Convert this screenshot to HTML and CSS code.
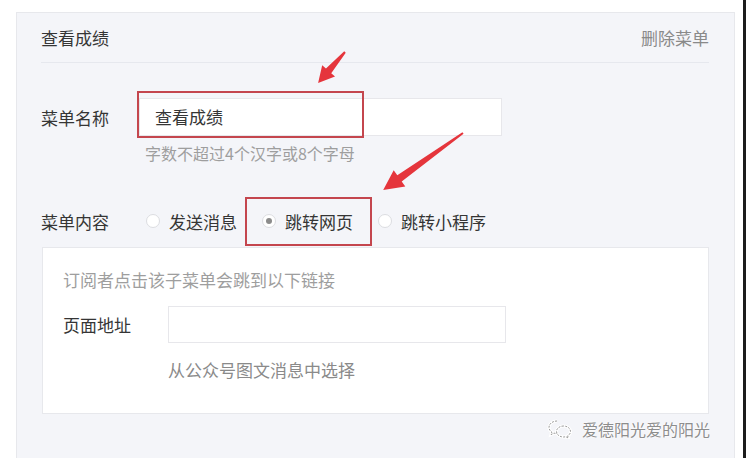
FILE: index.html
```html
<!DOCTYPE html>
<html lang="zh-CN">

<head>
    <meta charset="UTF-8">
    <meta name="viewport" content="width=device-width, initial-scale=1.0">
    <title>菜单设置</title>
    <link rel="stylesheet" href="styles.css">
</head>

<body>
    <div class="frame">
        <div class="menu-panel">
            <div class="panel-head">
                <span class="panel-title">查看成绩</span>
                <a class="delete-link">删除菜单</a>
            </div>

            <div class="form-row name-row">
                <label class="form-label">菜单名称</label>
                <div class="input-box">查看成绩</div>
            </div>
            <div class="form-hint">字数不超过4个汉字或8个字母</div>

            <div class="form-row content-row">
                <label class="form-label">菜单内容</label>
                <div class="radio-group">
                    <span class="radio-item"><i class="radio"></i>发送消息</span>
                    <span class="radio-item"><i class="radio checked"></i>跳转网页</span>
                    <span class="radio-item"><i class="radio"></i>跳转小程序</span>
                </div>
            </div>

            <div class="link-box">
                <div class="link-tip">订阅者点击该子菜单会跳到以下链接</div>
                <div class="form-row url-row">
                    <label class="url-label">页面地址</label>
                    <div class="input-box url-input"></div>
                </div>
                <div class="pick-link">从公众号图文消息中选择</div>
            </div>

            <!-- 标注框 -->
            <div class="mark mark-name"></div>
            <div class="mark mark-radio"></div>
        </div>

        <!-- 标注箭头 -->
        <svg class="arrows" width="749" height="458" viewBox="0 0 749 458">
            <polygon fill="#e5353c" transform="translate(345 52) rotate(131)"
                points="0,-1 25,-3.5 25,-8.5 41,0 25,8.5 25,3.5 0,1" />
            <polygon fill="#e5353c" transform="translate(463 133) rotate(144.5)"
                points="0,-1 78,-3.8 78,-10 98,0 78,10 78,3.8 0,1" />
        </svg>

        <div class="watermark">
            <svg width="26" height="20" viewBox="0 0 26 20">
                <g fill="none" stroke="#fff" stroke-width="3">
                    <path d="M10 2c-4.4 0-8 2.8-8 6.3 0 2 1.1 3.7 2.8 4.8L4 15.6l3-1.5c.9.3 1.9.4 3 .4" />
                    <path d="M16.5 7c-4 0-7 2.5-7 5.5s3 5.5 7 5.5c.8 0 1.5-.1 2.2-.3l2.6 1.3-.6-2.2c1.7-1 2.8-2.6 2.8-4.3 0-3-3-5.5-7-5.5z" />
                </g>
                <g fill="none" stroke="#9a9a9a" stroke-width="1" stroke-dasharray="2 1.2">
                    <path d="M10 2c-4.4 0-8 2.8-8 6.3 0 2 1.1 3.7 2.8 4.8L4 15.6l3-1.5c.9.3 1.9.4 3 .4" />
                    <path d="M16.5 7c-4 0-7 2.5-7 5.5s3 5.5 7 5.5c.8 0 1.5-.1 2.2-.3l2.6 1.3-.6-2.2c1.7-1 2.8-2.6 2.8-4.3 0-3-3-5.5-7-5.5z" />
                </g>
            </svg>
            <span>爱德阳光爱的阳光</span>
        </div>
    </div>
</body>

</html>
```

FILE: styles.css
```css
body {
    margin: 0;
    background: #fff;
    font-family: "Noto Sans CJK SC", "Noto Sans", sans-serif;
    color: #353535;
}

.frame {
    position: relative;
    width: 746px;
    height: 458px;
    overflow: hidden;
    border-right: 3px solid #1c1c1c;
    padding-top: 12px;
    box-sizing: border-box;
}

.menu-panel {
    position: relative;
    margin-left: 16px;
    width: 719px;
    height: 480px;
    box-sizing: border-box;
    padding: 0 25px 0 24px;
    background: #f4f5f9;
    border: 1px solid #e7e8ec;
}

.panel-head {
    display: flex;
    justify-content: space-between;
    align-items: center;
    height: 49px;
    border-bottom: 1px solid #e6e8ee;
    font-size: 17px;
}

.delete-link {
    color: #8a8a8a;
}

.form-row {
    display: flex;
    align-items: center;
}

.name-row {
    margin-top: 35px;
}

.form-label {
    width: 98px;
    font-size: 17px;
}

.input-box {
    box-sizing: border-box;
    height: 38px;
    background: #fff;
    border: 1px solid #e7e7eb;
    font-size: 17px;
    line-height: 36px;
    padding-left: 15px;
}

.name-row .input-box {
    width: 363px;
}

.form-hint {
    margin-top: 7px;
    margin-left: 104px;
    font-size: 16px;
    line-height: 20px;
    color: #9e9e9e;
}

.content-row {
    margin-top: 43px;
    height: 30px;
}

.radio-group {
    display: flex;
    align-items: center;
    gap: 25px;
    margin-left: 7px;
    font-size: 17px;
}

.radio-item {
    display: flex;
    align-items: center;
    gap: 9px;
}

.radio {
    display: inline-block;
    width: 14px;
    height: 14px;
    box-sizing: border-box;
    border: 1px solid #dcdde1;
    border-radius: 50%;
    background: #fff;
    position: relative;
}

.radio.checked::after {
    content: "";
    position: absolute;
    left: 3px;
    top: 3px;
    width: 6px;
    height: 6px;
    border-radius: 50%;
    background: #8c8c8c;
}

.link-box {
    margin-top: 11px;
    margin-left: 1px;
    height: 167px;
    box-sizing: border-box;
    background: #fff;
    border: 1px solid #e7e8ec;
    padding: 22px 0 0 20px;
    font-size: 17px;
}

.link-tip {
    line-height: 20px;
    color: #9e9e9e;
}

.url-row {
    margin-top: 16px;
}

.url-label {
    width: 105px;
}

.url-input {
    width: 338px;
    height: 37px;
}

.pick-link {
    margin-top: 17px;
    margin-left: 105px;
    line-height: 20px;
    color: #8a8a8a;
}

/* 红色标注 */
.mark {
    position: absolute;
    border: 2px solid #c4464e;
    box-sizing: border-box;
}

.mark-name {
    left: 120px;
    top: 78px;
    width: 227px;
    height: 47px;
}

.mark-radio {
    left: 228px;
    top: 184px;
    width: 127px;
    height: 49px;
}

.arrows {
    position: absolute;
    left: 0;
    top: 0;
}

.watermark {
    position: absolute;
    left: 547px;
    top: 417px;
    display: flex;
    align-items: center;
    gap: 9px;
    font-size: 16px;
    color: #8d8d8d;
    text-shadow: 0 0 2px #fff, 0 0 2px #fff;
}
```
